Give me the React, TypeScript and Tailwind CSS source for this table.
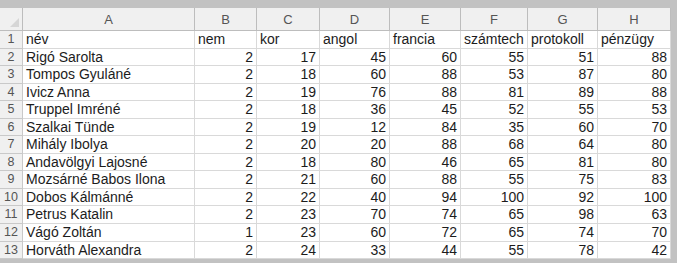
import React from 'react';

const cols = ['A', 'B', 'C', 'D', 'E', 'F', 'G', 'H'];
const headers = ['név', 'nem', 'kor', 'angol', 'francia', 'számtech', 'protokoll', 'pénzügy'];

const rows: [string, ...number[]][] = [
  ['Rigó Sarolta', 2, 17, 45, 60, 55, 51, 88],
  ['Tompos Gyuláné', 2, 18, 60, 88, 53, 87, 80],
  ['Ivicz Anna', 2, 19, 76, 88, 81, 89, 88],
  ['Truppel Imréné', 2, 18, 36, 45, 52, 55, 53],
  ['Szalkai Tünde', 2, 19, 12, 84, 35, 60, 70],
  ['Mihály Ibolya', 2, 20, 20, 88, 68, 64, 80],
  ['Andavölgyi Lajosné', 2, 18, 80, 46, 65, 81, 80],
  ['Mozsárné Babos Ilona', 2, 21, 60, 88, 55, 75, 83],
  ['Dobos Kálmánné', 2, 22, 40, 94, 100, 92, 100],
  ['Petrus Katalin', 2, 23, 70, 74, 65, 98, 63],
  ['Vágó Zoltán', 1, 23, 60, 72, 65, 74, 70],
  ['Horváth Alexandra', 2, 24, 33, 44, 55, 78, 42],
];

const cell = 'border-r border-b border-[#d9d9d9] h-[17.55px] leading-[17px] whitespace-nowrap overflow-hidden';
const rowHead = 'bg-[#f0f0f0] border-r border-b border-[#c9c9c9] h-[17.55px] leading-[17px] text-[12.5px] text-[#555] text-center';

const App: React.FC = () => {
  return (
    <div className="w-[677px] h-[263px] bg-[#c2c2c2] pt-[8px] pr-[6px] overflow-hidden font-['Liberation_Sans',Arial,sans-serif]">
      <div className="grid grid-cols-[23px_172px_62px_63px_70px_71px_67px_70px_73px] bg-white text-[14px] text-[#1c1c1c]">
        {/* column headers */}
        <div className="bg-[#f0f0f0] border-r border-b border-[#bdbdbd] h-[23px] relative">
          <div className="absolute right-[3px] bottom-[3px] w-0 h-0 border-l-[9px] border-l-transparent border-b-[9px] border-b-[#d6d6d6]" />
        </div>
        {cols.map((c) => (
          <div key={c} className="bg-[#f0f0f0] border-r border-b border-[#bdbdbd] h-[23px] leading-[24px] text-center text-[13px] text-[#555]">
            {c}
          </div>
        ))}

        {/* row 1 */}
        <div className={rowHead}>1</div>
        {headers.map((h) => (
          <div key={h} className={`${cell} pl-[3px]`}>{h}</div>
        ))}

        {rows.map((r, i) => (
          <React.Fragment key={i}>
            <div className={rowHead}>{i + 2}</div>
            {r.map((v, j) => (
              <div key={j} className={`${cell} ${j === 0 ? 'pl-[3px]' : 'text-right pr-[3px]'}`}>
                {v}
              </div>
            ))}
          </React.Fragment>
        ))}
      </div>
    </div>
  );
};

export default App;
